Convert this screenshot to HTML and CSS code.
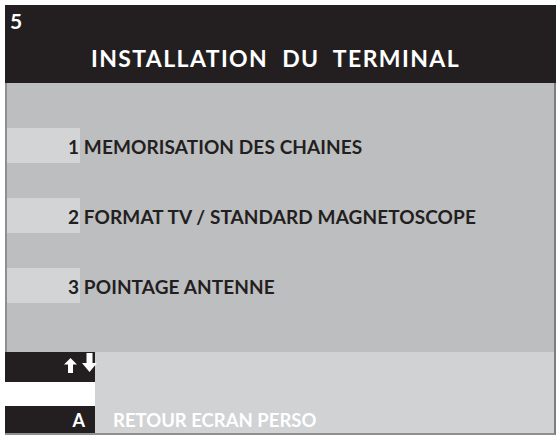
FILE: index.html
```html
<!DOCTYPE html>
<html>
<head>
<meta charset="utf-8">
<link rel="stylesheet" href="styles.css">
</head>
<body>
<div class="screen">
  <div class="header">
    <div class="num">5</div>
    <div class="title">INSTALLATION&nbsp; DU&nbsp; TERMINAL</div>
  </div>
  <div class="body">
    <div class="row"><span class="tab"></span><span class="label">1 MEMORISATION DES CHAINES</span></div>
    <div class="row"><span class="tab"></span><span class="label">2 FORMAT TV / STANDARD MAGNETOSCOPE</span></div>
    <div class="row"><span class="tab"></span><span class="label">3 POINTAGE ANTENNE</span></div>
  </div>
  <div class="footer">
    <div class="keys">
      <div class="key arrows">
        <svg width="34" height="20" viewBox="0 0 34 20">
          <path d="M6.5 5 L13 11.5 L9 11.5 L9 20 L4 20 L4 11.5 L0 11.5 Z" fill="#fff"/>
          <path d="M22.5 0 L28.5 0 L28.5 10 L33 10 L25.5 19 L18 10 L22.5 10 Z" fill="#fff"/>
        </svg>
      </div>
      <div class="key blank"></div>
      <div class="key letter">A</div>
    </div>
    <div class="actions">
      <div class="action">RETOUR ECRAN PERSO</div>
    </div>
  </div>
</div>
</body>
</html>
```
FILE: styles.css
```css
html, body {
  margin: 0;
  padding: 0;
  background: #ffffff;
}
body {
  font-family: Lato, "Open Sans", sans-serif;
}
.screen {
  margin: 5px 0 0 5px;
  width: 551px;
}
.header {
  background: #231f20;
  height: 78px;
  color: #fff;
  position: relative;
}
.num {
  position: absolute;
  left: 5px;
  top: 3px;
  font-size: 21px;
  font-weight: 700;
}
.title {
  text-align: center;
  padding-top: 40px;
  padding-right: 10px;
  font-size: 23px;
  font-weight: 700;
  letter-spacing: 1.4px;
  line-height: 26px;
}
.body {
  background: #bdbec0;
  border-left: 2px solid #8e8f91;
  border-right: 2px solid #7c7d7f;
  padding-top: 45px;
  padding-bottom: 49px;
  display: flex;
  flex-direction: column;
  gap: 35px;
}
.row {
  display: flex;
  align-items: center;
  height: 35px;
}
.tab {
  width: 73px;
  height: 35px;
  background: #d3d4d6;
}
.label {
  margin-left: -12px;
  font-size: 19px;
  font-weight: 700;
  color: #231f20;
  letter-spacing: 0.1px;
  padding-top: 1px;
}
.footer {
  display: grid;
  grid-template-columns: 90px 1fr;
  height: 81px;
  border-right: 2px solid #7c7d7f;
  border-bottom: 2px solid #8e8f91;
}
.keys {
  display: flex;
  flex-direction: column;
  position: relative;
  z-index: 1;
}
.key {
  display: flex;
  justify-content: flex-end;
  align-items: center;
}
.arrows {
  background: #231f20;
  height: 30px;
  align-items: flex-start;
}
.arrows svg {
  margin-right: -3px;
  margin-top: 1px;
}
.blank {
  background: #ffffff;
  height: 24px;
}
.letter {
  background: #231f20;
  height: 27px;
  color: #fff;
  font-weight: 700;
  font-size: 18px;
  padding-right: 10px;
}
.actions {
  background: #d1d2d4;
  display: flex;
  flex-direction: column;
  justify-content: flex-end;
}
.action {
  height: 27px;
  display: flex;
  align-items: center;
  padding-left: 18px;
  color: #fff;
  font-weight: 700;
  font-size: 18.5px;
}
```
